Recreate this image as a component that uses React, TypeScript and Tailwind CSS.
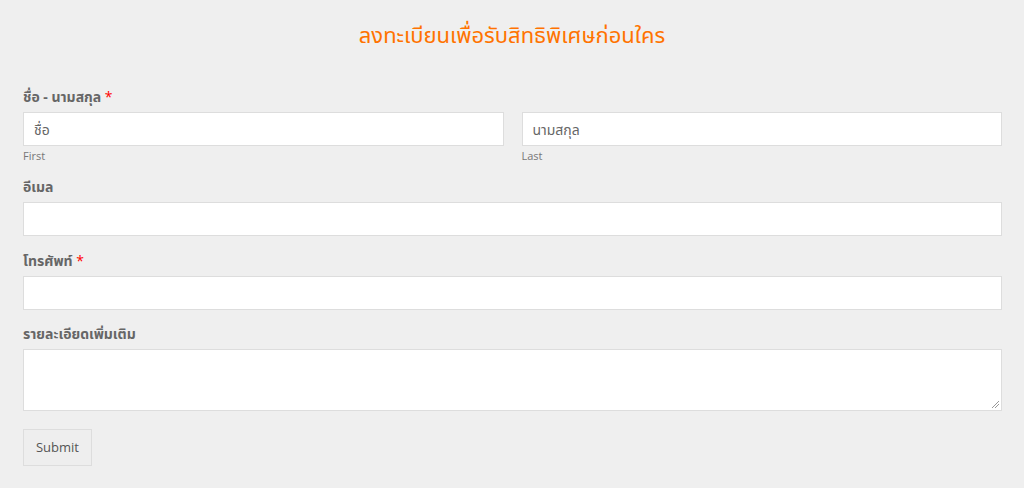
import React from "react";

const font = { fontFamily: '"Open Sans", "Noto Sans", "Noto Sans Thai", sans-serif' };

function Label({ text, required }: { text: string; required?: boolean }) {
  return (
    <div className="text-[14px] font-bold text-[#666] leading-[18px] h-[18px] mb-[6px]">
      {text}
      {required && <span className="text-[#f00] font-normal"> *</span>}
    </div>
  );
}

export default function App() {
  return (
    <div className="w-[1024px] h-[488px] bg-[#efefef] overflow-hidden" style={font}>
      <div className="pt-[20px] text-center text-[22px] leading-[28px] text-[#ff7300]">
        ลงทะเบียนเพื่อรับสิทธิพิเศษก่อนใคร
      </div>
      <div className="pl-[23px] pr-[22px] pt-[40px] flex flex-col">
        <Label text="ชื่อ - นามสกุล" required />
        <div className="flex gap-[18px]">
          <div className="flex-1 flex flex-col">
            <div className="h-[34px] bg-white border border-[#ddd] px-[10px] flex items-center text-[14px] text-[#666]">ชื่อ</div>
            <div className="text-[11px] text-[#777] mt-[2px] leading-[15px]">First</div>
          </div>
          <div className="flex-1 flex flex-col">
            <div className="h-[34px] bg-white border border-[#ddd] px-[10px] flex items-center text-[14px] text-[#666]">นามสกุล</div>
            <div className="text-[11px] text-[#777] mt-[2px] leading-[15px]">Last</div>
          </div>
        </div>
        <div className="mt-[15px]">
          <Label text="อีเมล" />
          <div className="h-[34px] bg-white border border-[#ddd]" />
        </div>
        <div className="mt-[16px]">
          <Label text="โทรศัพท์" required />
          <div className="h-[34px] bg-white border border-[#ddd]" />
        </div>
        <div className="mt-[15px]">
          <Label text="รายละเอียดเพิ่มเติม" />
          <div className="relative h-[62px] bg-white border border-[#ddd]">
            <svg className="absolute right-[2px] bottom-[2px]" width="8" height="8" viewBox="0 0 8 8">
              <line x1="1" y1="8" x2="8" y2="1" stroke="#999" strokeWidth="1" />
              <line x1="4" y1="8" x2="8" y2="4" stroke="#999" strokeWidth="1" />
            </svg>
          </div>
        </div>
        <div className="mt-[18px]">
          <div className="inline-flex items-center justify-center w-[69px] h-[37px] border border-[#ddd] bg-[#eee] text-[13px] text-[#555]">
            Submit
          </div>
        </div>
      </div>
    </div>
  );
}
